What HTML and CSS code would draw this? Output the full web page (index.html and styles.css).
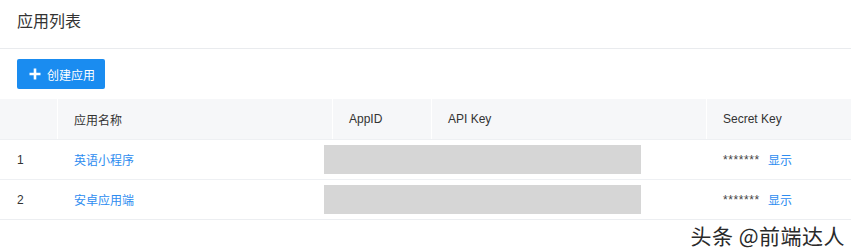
FILE: index.html
```html
<!DOCTYPE html>
<html lang="zh-CN">
<head>
<meta charset="utf-8">
<title>应用列表</title>
<link rel="stylesheet" href="styles.css">
</head>
<body>
<div class="page">
  <div class="title-bar"><h1 class="title">应用列表</h1></div>
  <div class="toolbar">
    <button class="btn-primary" type="button">
      <svg class="plus" width="12" height="12" viewBox="0 0 12 12"><path d="M6 0.5v11M0.5 6h11" stroke="#fff" stroke-width="2.6" fill="none"/></svg>
      <span>创建应用</span>
    </button>
  </div>
  <div class="table">
    <div class="row head">
      <div class="cell c-idx"></div>
      <div class="cell c-name">应用名称</div>
      <div class="cell c-id">AppID</div>
      <div class="cell c-key">API Key</div>
      <div class="cell c-secret">Secret Key</div>
    </div>
    <div class="row body">
      <div class="cell c-idx">1</div>
      <div class="cell c-name"><a class="link">英语小程序</a></div>
      <div class="cell c-id"></div>
      <div class="cell c-key"></div>
      <div class="cell c-secret"><span class="stars">*******</span><a class="link">显示</a></div>
      <div class="redact"></div>
    </div>
    <div class="row body">
      <div class="cell c-idx">2</div>
      <div class="cell c-name"><a class="link">安卓应用端</a></div>
      <div class="cell c-id"></div>
      <div class="cell c-key"></div>
      <div class="cell c-secret"><span class="stars">*******</span><a class="link">显示</a></div>
      <div class="redact"></div>
    </div>
  </div>
  <div class="watermark">头条 @前端达人</div>
</div>
</body>
</html>
```
FILE: styles.css
```css
* { box-sizing: border-box; }
html, body { margin: 0; padding: 0; background: #fff; }
body {
  font-family: "Liberation Sans", "Noto Sans CJK SC", sans-serif;
  color: #333;
  width: 851px;
  height: 251px;
  overflow: hidden;
}
.page { position: relative; height: 251px; }
.title-bar {
  height: 49px;
  border-bottom: 1px solid #e9ebee;
  padding: 9px 17px 0;
}
.title {
  margin: 0;
  font-size: 16px;
  font-weight: normal;
  color: #333;
  line-height: 22px;
  font-family: "Noto Sans CJK SC", sans-serif;
}
.toolbar {
  height: 50px;
  padding: 10px 17px 0;
}
.btn-primary {
  display: flex;
  align-items: center;
  gap: 6px;
  width: 88px;
  height: 30px;
  padding: 0 0 0 12px;
  border: 0;
  border-radius: 2px;
  background: #1a8cf0;
  color: #fff;
  font-size: 12px;
  font-family: "Noto Sans CJK SC", sans-serif;
}
.plus { display: block; }
.table { border-bottom: 1px solid #eceef1; }
.row { display: flex; position: relative; }
.row.head { height: 40px; background: #f6f7f9; }
.row.body { height: 40px; border-top: 1px solid #eef0f3; }
.row.body:first-of-type { border-top: 0; }
.cell {
  display: flex;
  align-items: center;
  padding-left: 16px;
  font-size: 12px;
  color: #333;
}
.head .cell { border-right: 1px solid #fff; color: #333; }
.head .cell:last-child { border-right: 0; }
.c-idx { width: 58px; padding-left: 17px; }
.c-name { width: 275px; font-family: "Noto Sans CJK SC", sans-serif; }
.c-id { width: 99px; }
.c-key { width: 275px; }
.c-secret { flex: 1; }
.link { color: #2d8cf0; font-family: "Noto Sans CJK SC", sans-serif; text-decoration: none; }
.stars { font-size: 12px; letter-spacing: 0.6px; margin-right: 8px; color: #444; }
.redact {
  position: absolute;
  left: 324px;
  top: 5px;
  width: 317px;
  height: 29px;
  background: #d6d6d6;
}
.watermark {
  position: absolute;
  right: 6px;
  bottom: 4px;
  font-family: "Noto Sans CJK SC", sans-serif;
  font-size: 21px;
  letter-spacing: 0.5px;
  line-height: 24px;
  color: #2a2a2a;
  text-shadow: 0 0 2px #fff, 0 0 2px #fff, 1px 1px 0 #fff, -1px -1px 0 #fff;
}
```
